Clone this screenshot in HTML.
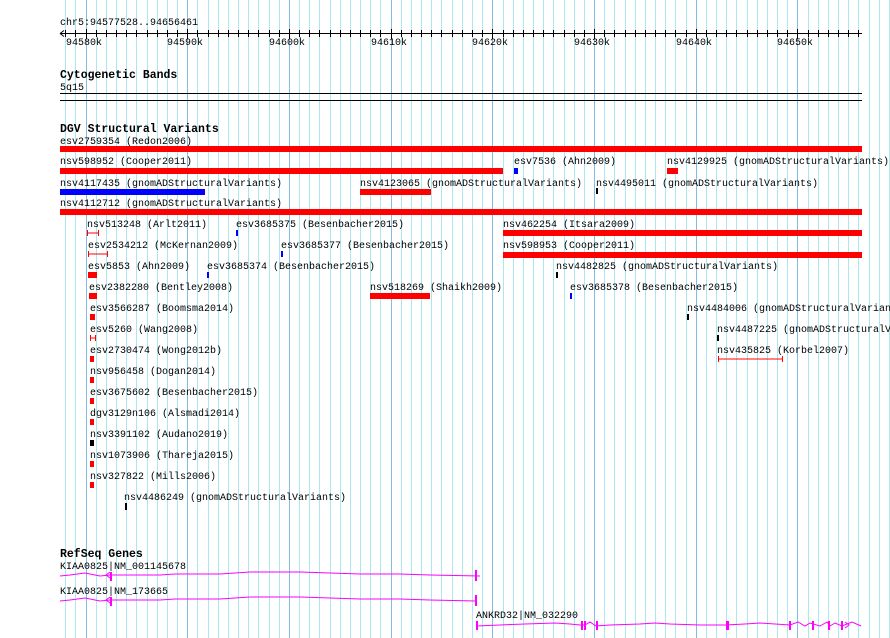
<!DOCTYPE html>
<html><head><style>
html,body{margin:0;padding:0;background:#fff;width:890px;height:638px;overflow:hidden}
svg text{font-family:"Liberation Mono",monospace;font-size:10px;fill:#000}
svg text.b{font-weight:bold;font-size:11.5px}
</style></head><body>
<svg width="890" height="638" xmlns="http://www.w3.org/2000/svg">
<path stroke="#aae8f0" stroke-width="1" d="M65.5 0V638M75.5 0V638M96.5 0V638M106.5 0V638M116.5 0V638M126.5 0V638M136.5 0V638M147.5 0V638M157.5 0V638M167.5 0V638M177.5 0V638M197.5 0V638M208.5 0V638M218.5 0V638M228.5 0V638M238.5 0V638M248.5 0V638M258.5 0V638M269.5 0V638M279.5 0V638M299.5 0V638M309.5 0V638M319.5 0V638M330.5 0V638M340.5 0V638M350.5 0V638M360.5 0V638M370.5 0V638M380.5 0V638M401.5 0V638M411.5 0V638M421.5 0V638M431.5 0V638M441.5 0V638M452.5 0V638M462.5 0V638M472.5 0V638M482.5 0V638M503.5 0V638M513.5 0V638M523.5 0V638M533.5 0V638M543.5 0V638M553.5 0V638M564.5 0V638M574.5 0V638M584.5 0V638M604.5 0V638M614.5 0V638M625.5 0V638M635.5 0V638M645.5 0V638M655.5 0V638M665.5 0V638M675.5 0V638M686.5 0V638M706.5 0V638M716.5 0V638M726.5 0V638M736.5 0V638M747.5 0V638M757.5 0V638M767.5 0V638M777.5 0V638M787.5 0V638M808.5 0V638M818.5 0V638M828.5 0V638M838.5 0V638M848.5 0V638M858.5 0V638M869.5 0V638M879.5 0V638M889.5 0V638"/>
<path stroke="#7fbfe6" stroke-width="1" d="M86.5 0V638M187.5 0V638M289.5 0V638M391.5 0V638M492.5 0V638M594.5 0V638M696.5 0V638M797.5 0V638"/>
<!-- ruler -->
<text x="60" y="25">chr5:94577528..94656461</text>
<line x1="60" y1="33.5" x2="862" y2="33.5" stroke="#000"/>
<path d="M60 33.5 l4 -3 M60 33.5 l4 3" stroke="#000"/>
<path stroke="#000" d="M65.5 30V37M75.5 30V37M96.5 30V37M106.5 30V37M116.5 30V37M126.5 30V37M136.5 30V37M147.5 30V37M157.5 30V37M167.5 30V37M177.5 30V37M197.5 30V37M208.5 30V37M218.5 30V37M228.5 30V37M238.5 30V37M248.5 30V37M258.5 30V37M269.5 30V37M279.5 30V37M299.5 30V37M309.5 30V37M319.5 30V37M330.5 30V37M340.5 30V37M350.5 30V37M360.5 30V37M370.5 30V37M380.5 30V37M401.5 30V37M411.5 30V37M421.5 30V37M431.5 30V37M441.5 30V37M452.5 30V37M462.5 30V37M472.5 30V37M482.5 30V37M503.5 30V37M513.5 30V37M523.5 30V37M533.5 30V37M543.5 30V37M553.5 30V37M564.5 30V37M574.5 30V37M584.5 30V37M604.5 30V37M614.5 30V37M625.5 30V37M635.5 30V37M645.5 30V37M655.5 30V37M665.5 30V37M675.5 30V37M686.5 30V37M706.5 30V37M716.5 30V37M726.5 30V37M736.5 30V37M747.5 30V37M757.5 30V37M767.5 30V37M777.5 30V37M787.5 30V37M808.5 30V37M818.5 30V37M828.5 30V37M838.5 30V37M848.5 30V37M858.5 30V37M86.5 29V39M187.5 29V39M289.5 29V39M391.5 29V39M492.5 29V39M594.5 29V39M696.5 29V39M797.5 29V39"/>
<text x="66" y="45">94580k</text>
<text x="167" y="45">94590k</text>
<text x="269" y="45">94600k</text>
<text x="371" y="45">94610k</text>
<text x="472" y="45">94620k</text>
<text x="574" y="45">94630k</text>
<text x="676" y="45">94640k</text>
<text x="777" y="45">94650k</text>
<text class="b" x="60" y="78">Cytogenetic Bands</text>
<text x="60" y="90">5q15</text>
<line x1="60" y1="93.5" x2="862" y2="93.5" stroke="#000"/>
<line x1="60" y1="100.5" x2="862" y2="100.5" stroke="#000"/>
<text class="b" x="60" y="132">DGV Structural Variants</text>
<text x="60" y="144">esv2759354 (Redon2006)</text>
<rect x="60" y="146" width="802" height="6" fill="#f00"/>
<text x="60" y="164">nsv598952 (Cooper2011)</text>
<rect x="60" y="168" width="443" height="6" fill="#f00"/>
<text x="514" y="164">esv7536 (Ahn2009)</text>
<rect x="514" y="168" width="4" height="6" fill="#00f"/>
<text x="667" y="164">nsv4129925 (gnomADStructuralVariants)</text>
<rect x="667" y="168" width="11" height="6" fill="#f00"/>
<text x="60" y="186">nsv4117435 (gnomADStructuralVariants)</text>
<rect x="60" y="189" width="145" height="6" fill="#00f"/>
<text x="360" y="186">nsv4123065 (gnomADStructuralVariants)</text>
<rect x="360" y="189" width="71" height="6" fill="#f00"/>
<text x="596" y="186">nsv4495011 (gnomADStructuralVariants)</text>
<rect x="596" y="188" width="2" height="6" fill="#000"/>
<text x="60" y="206">nsv4112712 (gnomADStructuralVariants)</text>
<rect x="60" y="209" width="802" height="6" fill="#f00"/>
<text x="87" y="227">nsv513248 (Arlt2011)</text>
<path d="M87.5 230v6M98.5 230v6M87 233h12" stroke="#f00"/>
<text x="236" y="227">esv3685375 (Besenbacher2015)</text>
<rect x="236" y="230" width="2" height="6" fill="#00f"/>
<text x="503" y="227">nsv462254 (Itsara2009)</text>
<rect x="503" y="230" width="359" height="6" fill="#f00"/>
<text x="88" y="248">esv2534212 (McKernan2009)</text>
<path d="M88.5 251v6M107.5 251v6M88 254h20" stroke="#f00"/>
<text x="281" y="248">esv3685377 (Besenbacher2015)</text>
<rect x="281" y="251" width="2" height="6" fill="#00f"/>
<text x="503" y="248">nsv598953 (Cooper2011)</text>
<rect x="503" y="252" width="359" height="6" fill="#f00"/>
<text x="88" y="269">esv5853 (Ahn2009)</text>
<rect x="88" y="272" width="9" height="6" fill="#f00"/>
<text x="207" y="269">esv3685374 (Besenbacher2015)</text>
<rect x="207" y="272" width="2" height="6" fill="#00f"/>
<text x="556" y="269">nsv4482825 (gnomADStructuralVariants)</text>
<rect x="556" y="272" width="2" height="6" fill="#000"/>
<text x="89" y="290">esv2382280 (Bentley2008)</text>
<rect x="89" y="293" width="8" height="6" fill="#f00"/>
<text x="370" y="290">nsv518269 (Shaikh2009)</text>
<rect x="370" y="293" width="60" height="6" fill="#f00"/>
<text x="570" y="290">esv3685378 (Besenbacher2015)</text>
<rect x="570" y="293" width="2" height="6" fill="#00f"/>
<text x="90" y="311">esv3566287 (Boomsma2014)</text>
<rect x="90" y="314" width="5" height="6" fill="#f00"/>
<text x="687" y="311">nsv4484006 (gnomADStructuralVariants)</text>
<rect x="687" y="314" width="2" height="6" fill="#000"/>
<text x="90" y="332">esv5260 (Wang2008)</text>
<path d="M90.5 335v6M95.5 335v6M90 338h6" stroke="#f00"/>
<text x="717" y="332">nsv4487225 (gnomADStructuralVariants)</text>
<rect x="717" y="335" width="2" height="6" fill="#000"/>
<text x="90" y="353">esv2730474 (Wong2012b)</text>
<rect x="90" y="356" width="4" height="6" fill="#f00"/>
<text x="717" y="353">nsv435825 (Korbel2007)</text>
<path d="M718.5 356v6M782.5 356v6M718 359h65" stroke="#f00"/>
<text x="90" y="374">nsv956458 (Dogan2014)</text>
<rect x="90" y="377" width="4" height="6" fill="#f00"/>
<text x="90" y="395">esv3675602 (Besenbacher2015)</text>
<rect x="90" y="398" width="4" height="6" fill="#f00"/>
<text x="90" y="416">dgv3129n106 (Alsmadi2014)</text>
<rect x="90" y="419" width="4" height="6" fill="#f00"/>
<text x="90" y="437">nsv3391102 (Audano2019)</text>
<rect x="90" y="440" width="4" height="6" fill="#000"/>
<text x="90" y="458">nsv1073906 (Thareja2015)</text>
<rect x="90" y="461" width="4" height="6" fill="#f00"/>
<text x="90" y="479">nsv327822 (Mills2006)</text>
<rect x="90" y="482" width="4" height="6" fill="#f00"/>
<text x="124" y="500">nsv4486249 (gnomADStructuralVariants)</text>
<rect x="125" y="503" width="2" height="7" fill="#000"/>
<!-- genes -->
<text class="b" x="60" y="557">RefSeq Genes</text>
<text x="60" y="569">KIAA0825|NM_001145678</text>
<polyline fill="none" stroke="#f0f" points="60,576 70,575 85,573 100,576 110,575 130,575 160,575 175,574 220,574 250,572 300,572 360,574 400,574 430,575 480,576"/>
<path d="M110 572l-4 3 4 3" stroke="#f0f" fill="none"/>
<rect x="110" y="572" width="2" height="9" fill="#f0f"/>
<rect x="475" y="570" width="2" height="11" fill="#f0f"/>
<text x="60" y="594">KIAA0825|NM_173665</text>
<polyline fill="none" stroke="#f0f" points="60,601 70,600 85,598 100,601 110,600 130,600 160,600 175,599 220,599 250,597 300,597 360,599 400,599 430,600 476,601"/>
<path d="M110 597l-4 3 4 3" stroke="#f0f" fill="none"/>
<rect x="110" y="597" width="2" height="9" fill="#f0f"/>
<rect x="475" y="595" width="2" height="11" fill="#f0f"/>
<text x="476" y="618">ANKRD32|NM_032290</text>
<polyline fill="none" stroke="#f0f" points="476,626 500,625 525,624 555,623 570,624 580,625 585,625 590,622 596,626 610,625 640,624 655,623 670,624 700,625 725,625 745,624 760,623 775,624 790,625 798,622 805,626 810,623 820,626 827,622 830,626 835,623 842,626 847,624 852,622 861,626"/>
<rect x="476" y="621" width="2" height="9" fill="#f0f"/>
<rect x="581" y="621" width="2" height="9" fill="#f0f"/>
<rect x="584" y="621" width="2" height="9" fill="#f0f"/>
<rect x="596" y="621" width="2" height="9" fill="#f0f"/>
<rect x="726" y="621" width="3" height="9" fill="#f0f"/>
<rect x="789" y="621" width="2" height="9" fill="#f0f"/>
<rect x="812" y="621" width="2" height="9" fill="#f0f"/>
<rect x="828" y="621" width="2" height="9" fill="#f0f"/>
<rect x="841" y="621" width="2" height="9" fill="#f0f"/>
<path d="M845 622l4 3-4 3" stroke="#f0f" fill="none"/>
</svg>
</body></html>
